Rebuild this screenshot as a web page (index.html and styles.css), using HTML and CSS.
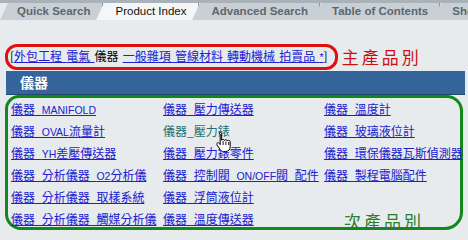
FILE: index.html
```html
<!DOCTYPE html>
<html>

<head>
    <title>Product Index</title>
    <link rel="stylesheet" href="styles.css">
</head>

<body>
    <!-- Tab strip -->
    <div class="tabs">
        <div class="tab">Quick Search</div>
        <div class="tab active">Product Index</div>
        <div class="tab">Advanced Search</div>
        <div class="tab">Table of Contents</div>
        <div class="tab">Show</div>
    </div>

    <!-- Main categories -->
    <div class="cats">
        <div class="cats-box">[<a href="#">外包工程 </a><a href="#">電氣 </a>儀器 <a href="#">一般雜項 </a><a href="#">管線材料 </a><a href="#">轉動機械 </a><a href="#">拍賣品 <span class="en">*</span></a>]</div>
        <div class="note note-red">主產品別</div>
    </div>

    <div class="head">儀器</div>

    <!-- Sub categories -->
    <div class="sub">
        <a href="#">儀器_<span class="en">MANIFOLD</span></a>
        <a href="#">儀器_壓力傳送器</a>
        <a href="#">儀器_溫度計</a>
        <a href="#">儀器_<span class="en">OVAL</span>流量計</a>
        <a href="#" class="hover">儀器_壓力錶</a>
        <a href="#">儀器_玻璃液位計</a>
        <a href="#">儀器_<span class="en">YH</span>差壓傳送器</a>
        <a href="#">儀器_壓力錶零件</a>
        <a href="#">儀器_環保儀器瓦斯偵測器</a>
        <a href="#">儀器_分析儀器_<span class="en">O2</span>分析儀</a>
        <a href="#">儀器_控制閥_<span class="en">ON/OFF</span>閥_配件</a>
        <a href="#">儀器_製程電腦配件</a>
        <a href="#">儀器_分析儀器_取樣系統</a>
        <a href="#">儀器_浮筒液位計</a>
        <span></span>
        <a href="#">儀器_分析儀器_觸媒分析儀</a>
        <a href="#">儀器_溫度傳送器</a>
        <div class="note note-green">次產品別</div>
    </div>

    <!-- mouse pointer over the hovered link -->
    <svg class="cursor" width="18" height="22" viewBox="0 0 18 22">
        <path d="M5 1.5c1 0 1.6.6 1.6 1.6v6.2c.3-.6.9-.9 1.5-.9.8 0 1.3.5 1.4 1.1.3-.5.8-.8 1.4-.8.8 0 1.3.5 1.4 1.2.3-.4.8-.6 1.3-.6 1 0 1.6.7 1.6 1.7v4.6c0 2.8-1.7 4.9-4.6 4.9H8.5c-1.6 0-2.5-.7-3.4-2L2 13.9c-.5-.8-.3-1.6.4-2 .7-.4 1.4-.2 1.9.5l.9 1.3V3.1C3.4 2.1 4 1.5 5 1.5z" fill="#fff" stroke="#000" stroke-width="1"/>
        <path d="M8.1 10v4M10.9 10.5v3.5M13.7 11v3" stroke="#000" stroke-width="0.9"/>
    </svg>
</body>

</html>
```

FILE: styles.css
```css
body {
    margin: 0;
    padding: 0;
    background-color: #e7ebee;
    font-family: "Noto Sans CJK TC", "Liberation Sans", sans-serif;
    font-size: 12px;
    overflow: hidden;
    position: relative;
    height: 240px;
}

a {
    color: #2020d0;
    text-decoration: underline;
}

/* latin runs inside chinese labels */
.en {
    font-family: "Liberation Sans", sans-serif;
    font-size: 10.5px;
}

/* tabs */
.tabs {
    display: flex;
    height: 17px;
    border-top: 3px solid #a9b2b8;
    padding-left: 8px;
}

.tab {
    position: relative;
    background-color: #c9d0d5;
    color: #5c666e;
    font-family: "Liberation Sans", sans-serif;
    font-weight: bold;
    font-size: 11.5px;
    line-height: 17px;
    padding: 0 11px 0 11px;
    border-right: 1px solid #8a949b;
    margin-right: 1px;
    white-space: nowrap;
}

.tab::before {
    content: "";
    position: absolute;
    left: -8px;
    top: 0;
    border-left: 8px solid transparent;
    border-bottom: 17px solid #c9d0d5;
}

.tab.active {
    background-color: #f4f6f7;
    color: #111;
    font-weight: normal;
    font-size: 11.5px;
    padding: 0 12px 0 12px;
}

.tab.active::before {
    border-bottom-color: #f4f6f7;
}

.tab:first-child {
    padding-left: 9px;
    width: 74px;
}

/* main categories */
.cats {
    display: flex;
    align-items: center;
    margin: 24px 0 0 5px;
}

.cats-box {
    border: 3px solid #e01010;
    border-radius: 12px;
    padding: 0 7px 1px 2px;
    line-height: 17px;
    word-spacing: 1.5px;
    white-space: nowrap;
}

.note {
    font-size: 17px;
    letter-spacing: 3px;
    font-family: "Noto Sans CJK TC", serif;
}

.note-red {
    color: #cc1010;
    margin-left: 4px;
    margin-top: -2px;
}

.head {
    margin: 1px 3px 0 6px;
    height: 23px;
    line-height: 23px;
    background-color: #35649a;
    color: #fff;
    font-weight: bold;
    font-size: 14px;
    padding-left: 14px;
    border-bottom: 1px solid #24476e;
}

/* sub categories */
.sub {
    display: grid;
    grid-template-columns: 152px 161px auto;
    grid-auto-rows: 22px;
    align-items: center;
    margin: 0 5px 0 5px;
    height: 128px;
    border: 3px solid #11881a;
    border-radius: 14px 16px 18px 16px;
    padding: 0 0 1px 3px;
    white-space: nowrap;
}

.sub > a {
    margin-top: -2px;
}

.sub a.hover {
    color: #1f7070;
    text-decoration: none;
}

.note-green {
    color: #2a7d2a;
    margin-left: 20px;
    margin-top: 2px;
}

.cursor {
    position: absolute;
    left: 215px;
    top: 131px;
}
```
